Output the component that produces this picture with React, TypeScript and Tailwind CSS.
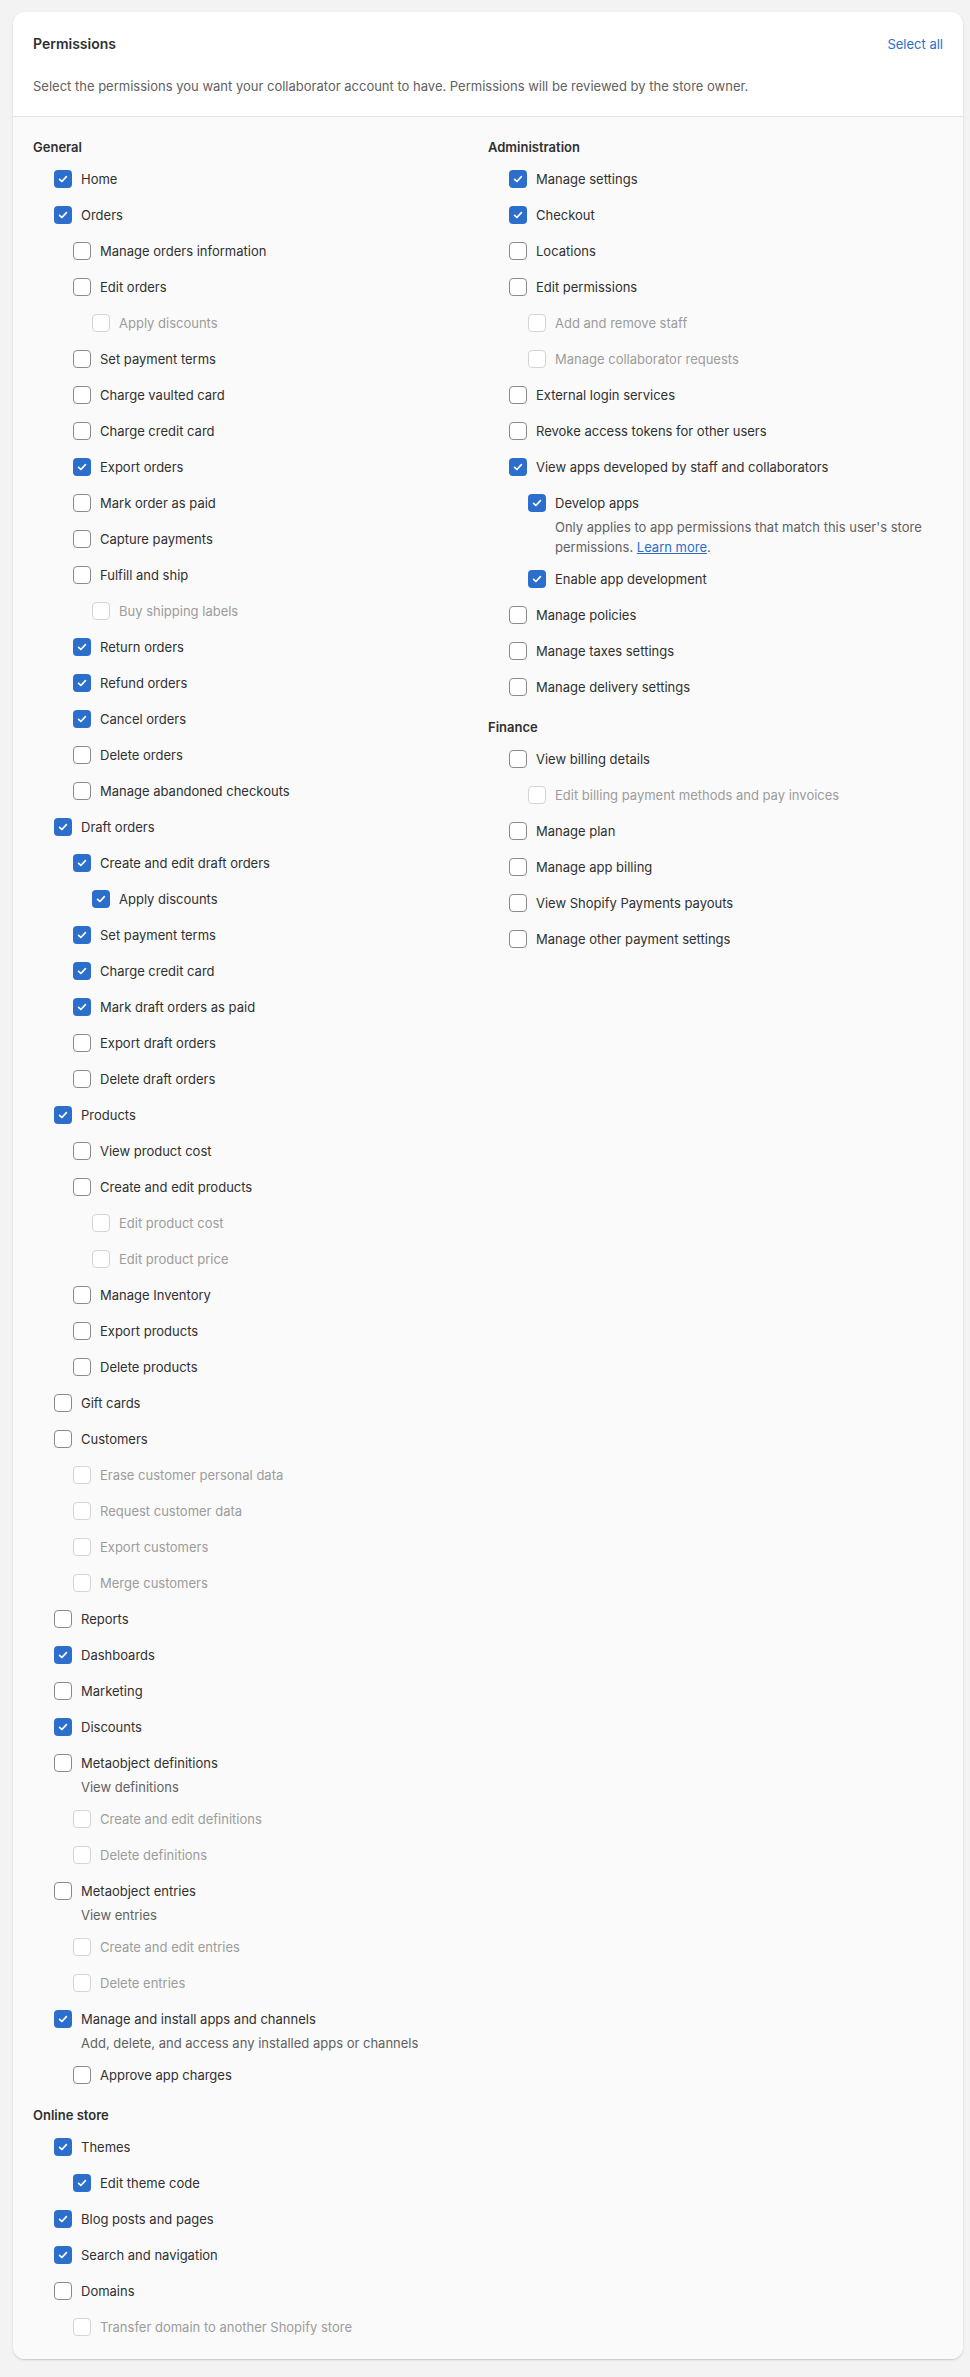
import React from "react"

type Item = {
  label: string
  checked?: boolean
  disabled?: boolean
  help?: React.ReactNode
  children?: Item[]
}

const general: Item[] = [
  { label: "Home", checked: true },
  {
    label: "Orders",
    checked: true,
    children: [
      { label: "Manage orders information" },
      { label: "Edit orders", children: [{ label: "Apply discounts", disabled: true }] },
      { label: "Set payment terms" },
      { label: "Charge vaulted card" },
      { label: "Charge credit card" },
      { label: "Export orders", checked: true },
      { label: "Mark order as paid" },
      { label: "Capture payments" },
      { label: "Fulfill and ship", children: [{ label: "Buy shipping labels", disabled: true }] },
      { label: "Return orders", checked: true },
      { label: "Refund orders", checked: true },
      { label: "Cancel orders", checked: true },
      { label: "Delete orders" },
      { label: "Manage abandoned checkouts" },
    ],
  },
  {
    label: "Draft orders",
    checked: true,
    children: [
      {
        label: "Create and edit draft orders",
        checked: true,
        children: [{ label: "Apply discounts", checked: true }],
      },
      { label: "Set payment terms", checked: true },
      { label: "Charge credit card", checked: true },
      { label: "Mark draft orders as paid", checked: true },
      { label: "Export draft orders" },
      { label: "Delete draft orders" },
    ],
  },
  {
    label: "Products",
    checked: true,
    children: [
      { label: "View product cost" },
      {
        label: "Create and edit products",
        children: [
          { label: "Edit product cost", disabled: true },
          { label: "Edit product price", disabled: true },
        ],
      },
      { label: "Manage Inventory" },
      { label: "Export products" },
      { label: "Delete products" },
    ],
  },
  { label: "Gift cards" },
  {
    label: "Customers",
    children: [
      { label: "Erase customer personal data", disabled: true },
      { label: "Request customer data", disabled: true },
      { label: "Export customers", disabled: true },
      { label: "Merge customers", disabled: true },
    ],
  },
  { label: "Reports" },
  { label: "Dashboards", checked: true },
  { label: "Marketing" },
  { label: "Discounts", checked: true },
  {
    label: "Metaobject definitions",
    help: "View definitions",
    children: [
      { label: "Create and edit definitions", disabled: true },
      { label: "Delete definitions", disabled: true },
    ],
  },
  {
    label: "Metaobject entries",
    help: "View entries",
    children: [
      { label: "Create and edit entries", disabled: true },
      { label: "Delete entries", disabled: true },
    ],
  },
  {
    label: "Manage and install apps and channels",
    checked: true,
    help: "Add, delete, and access any installed apps or channels",
    children: [{ label: "Approve app charges" }],
  },
]

const onlineStore: Item[] = [
  { label: "Themes", checked: true, children: [{ label: "Edit theme code", checked: true }] },
  { label: "Blog posts and pages", checked: true },
  { label: "Search and navigation", checked: true },
  { label: "Domains", children: [{ label: "Transfer domain to another Shopify store", disabled: true }] },
]

const administration: Item[] = [
  { label: "Manage settings", checked: true },
  { label: "Checkout", checked: true },
  { label: "Locations" },
  {
    label: "Edit permissions",
    children: [
      { label: "Add and remove staff", disabled: true },
      { label: "Manage collaborator requests", disabled: true },
    ],
  },
  { label: "External login services" },
  { label: "Revoke access tokens for other users" },
  {
    label: "View apps developed by staff and collaborators",
    checked: true,
    children: [
      {
        label: "Develop apps",
        checked: true,
        help: (
          <>
            Only applies to app permissions that match this user's store permissions.{" "}
            <a href="#" className="text-[#2c6ecb] underline">
              Learn more
            </a>
            .
          </>
        ),
      },
      { label: "Enable app development", checked: true },
    ],
  },
  { label: "Manage policies" },
  { label: "Manage taxes settings" },
  { label: "Manage delivery settings" },
]

const finance: Item[] = [
  {
    label: "View billing details",
    children: [{ label: "Edit billing payment methods and pay invoices", disabled: true }],
  },
  { label: "Manage plan" },
  { label: "Manage app billing" },
  { label: "View Shopify Payments payouts" },
  { label: "Manage other payment settings" },
]

function Checkbox({ checked, disabled }: { checked?: boolean; disabled?: boolean }) {
  if (checked) {
    return (
      <span className="flex h-[18px] w-[18px] shrink-0 items-center justify-center rounded-[4px] bg-[#2c6ecb]">
        <svg width="12" height="12" viewBox="0 0 12 12" fill="none">
          <path d="M2.6 6.3 L4.9 8.5 L9.4 3.6" stroke="white" strokeWidth="1.7" strokeLinecap="round" strokeLinejoin="round" />
        </svg>
      </span>
    )
  }
  return (
    <span
      className={
        disabled
          ? "h-[18px] w-[18px] shrink-0 rounded-[4px] border-[1.5px] border-[#d4d4d4] bg-white"
          : "h-[18px] w-[18px] shrink-0 rounded-[4px] border-[1.5px] border-[#8a8a8a] bg-white"
      }
    />
  )
}

function Row({ item }: { item: Item }) {
  return (
    <li>
      <label className="flex h-6 items-center gap-[9px]">
        <Checkbox checked={item.checked} disabled={item.disabled} />
        <span className={item.disabled ? "text-[#9c9c9c]" : "text-[#303030]"}>{item.label}</span>
      </label>
      {item.help && <p className="mt-0.5 -mb-0.5 pl-[27px] leading-5 text-[#616161]">{item.help}</p>}
      {item.children && (
        <ul className="mt-3 flex flex-col gap-3 pl-[19px]">
          {item.children.map((c, i) => (
            <Row key={i} item={c} />
          ))}
        </ul>
      )}
    </li>
  )
}

function Group({ title, items, first }: { title: string; items: Item[]; first?: boolean }) {
  return (
    <div className={first ? "" : "mt-[18px]"}>
      <h3 className="leading-5 font-semibold text-[#303030]">{title}</h3>
      <ul className="mt-2.5 flex flex-col gap-3 pl-[21px]">
        {items.map((item, i) => (
          <Row key={i} item={item} />
        ))}
      </ul>
    </div>
  )
}

export default function App() {
  return (
    <div
      className="min-h-[2377px] bg-[#f3f3f3] pt-3 pb-[17px] pl-[13px] text-[13px] leading-5"
      style={{ fontFamily: "Inter, 'Noto Sans', sans-serif" }}
    >
      <div className="w-[950px] overflow-hidden rounded-xl bg-white shadow-[0_1px_0_rgba(0,0,0,0.08),0_1px_3px_rgba(0,0,0,0.12)]">
        <div className="border-b border-[#e3e3e3] p-5">
          <div className="flex h-6 items-center justify-between">
            <h2 className="text-[14px] font-semibold text-[#303030]">Permissions</h2>
            <button className="text-[13px] text-[#2c6ecb]">Select all</button>
          </div>
          <p className="mt-5 text-[#616161]">
            Select the permissions you want your collaborator account to have. Permissions will be reviewed by the store owner.
          </p>
        </div>
        <div className="grid grid-cols-2 bg-[#fafafa] p-5">
          <div>
            <Group title="General" items={general} first />
            <Group title="Online store" items={onlineStore} />
          </div>
          <div>
            <Group title="Administration" items={administration} first />
            <Group title="Finance" items={finance} />
          </div>
        </div>
      </div>
    </div>
  )
}
